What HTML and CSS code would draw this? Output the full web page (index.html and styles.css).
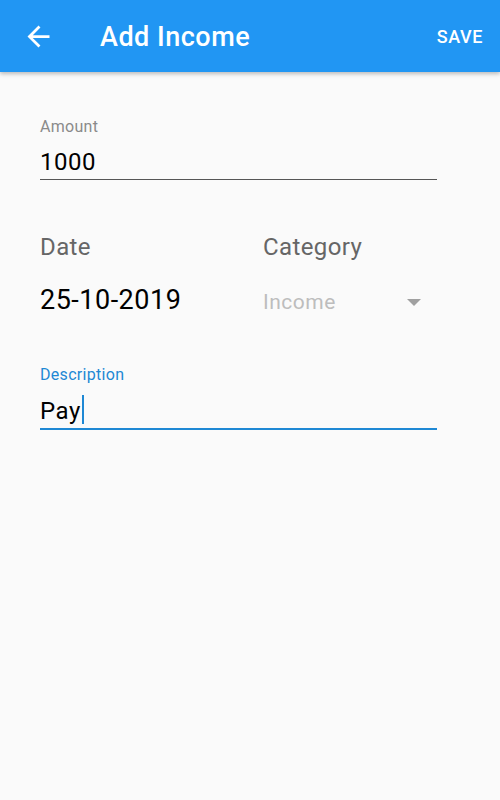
FILE: index.html
```html
<!DOCTYPE html>
<html lang="en">
<head>
    <meta charset="UTF-8">
    <meta name="viewport" content="width=device-width, initial-scale=1.0">
    <title>Add Income</title>
    <link rel="stylesheet" href="styles.css">
</head>
<body>

<header class="appbar">
    <svg class="back" width="33" height="33" viewBox="0 0 24 24">
        <path d="M20 11H7.83l5.59-5.59L12 4l-8 8 8 8 1.41-1.41L7.83 13H20v-2z" fill="#fff"/>
    </svg>
    <h1 class="title">Add Income</h1>
    <span class="save">SAVE</span>
</header>

<main class="form">
    <div class="field">
        <label class="label">Amount</label>
        <div class="input">1000</div>
    </div>

    <div class="row">
        <div class="col date">
            <div class="col-label">Date</div>
            <div class="date-value">25-10-2019</div>
        </div>
        <div class="col category">
            <div class="col-label">Category</div>
            <div class="dropdown">
                <span class="hint">Income</span>
                <span class="arrow"></span>
            </div>
        </div>
    </div>

    <div class="field focused">
        <label class="label">Description</label>
        <div class="input">Pay<span class="caret"></span></div>
    </div>
</main>

</body>
</html>
```

FILE: styles.css
```css
body {
    font-family: Roboto, "Noto Sans", sans-serif;
    background-color: #fafafa;
    margin: 0;
    height: 100vh;
}
.appbar {
    height: 72px;
    background-color: #2196f3;
    display: flex;
    align-items: center;
    padding: 0 17px 0 22px;
    box-shadow: 0 2px 4px rgba(0, 0, 0, 0.25);
}
.back {
    display: block;
}
.title {
    flex: 1;
    margin: 2px 0 0 45px;
    color: #fff;
    font-size: 27px;
    font-weight: 500;
    letter-spacing: 0.5px;
}
.save {
    color: #fff;
    font-size: 18px;
    font-weight: 500;
    letter-spacing: 0.6px;
}
.form {
    padding: 46px 63px 0 40px;
}
.label {
    display: block;
    font-size: 16px;
    line-height: 18px;
    letter-spacing: 0.3px;
    color: #8a8a8a;
    margin-bottom: 11px;
}
.input {
    font-size: 24px;
    line-height: 30px;
    letter-spacing: 0.5px;
    color: #000;
    padding-bottom: 2px;
    border-bottom: 1px solid #555;
}
.focused .label {
    color: #1e88d4;
}
.focused .input {
    border-bottom: 2px solid #1e88d4;
}
.caret {
    display: inline-block;
    width: 2px;
    height: 29px;
    background-color: #1e88d4;
    vertical-align: -5px;
    margin-left: 1px;
}
.row {
    display: flex;
    margin-top: 54px;
}
.col {
    display: flex;
    flex-direction: column;
}
.date {
    width: 223px;
}
.category {
    width: 166px;
}
.col-label {
    font-size: 24px;
    line-height: 26px;
    letter-spacing: 0.4px;
    color: #666;
    margin-bottom: 24px;
}
.date-value {
    font-size: 27px;
    line-height: 32px;
    letter-spacing: 0.5px;
    color: #000;
}
.dropdown {
    display: flex;
    align-items: center;
    justify-content: space-between;
    height: 32px;
}
.hint {
    font-size: 21px;
    letter-spacing: 0.5px;
    color: #bdbdbd;
    margin-top: 4px;
}
.arrow {
    width: 0;
    height: 0;
    border-left: 7px solid transparent;
    border-right: 7px solid transparent;
    border-top: 7px solid #a0a0a0;
    margin: 4px 8px 0 0;
}
.focused {
    margin-top: 50px;
}
```
